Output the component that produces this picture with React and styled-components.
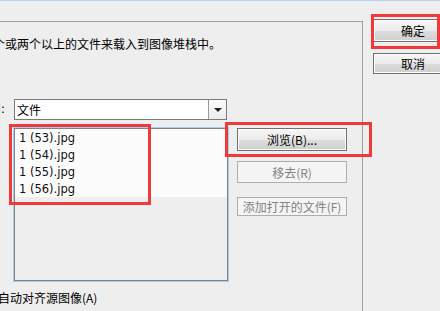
import React from 'react';
import styled, { createGlobalStyle } from 'styled-components';

const GlobalStyle = createGlobalStyle`
  html, body {
    margin: 0;
    padding: 0;
    background: #eeeeee;
  }
  body {
    font-family: "Noto Sans CJK SC", "Noto Sans", sans-serif;
    font-size: 12px;
    color: #000;
  }
`;

const Dialog = styled.div`
  position: relative;
  width: 440px;
  height: 311px;
  overflow: hidden;
  background: #eeeeee;
  display: flex;
  flex-direction: column;
`;

const TitleEdge = styled.div`
  flex: none;
  height: 1px;
  background: #bcd4ec;
`;

const Body = styled.div`
  flex: 1;
  display: flex;
  align-items: flex-start;
`;

const GroupBox = styled.div`
  flex: none;
  width: 363px;
  height: 300px;
  margin-top: 20px;
  padding-top: 14px;
  box-sizing: border-box;
  border-top: 1px solid #a0a0a0;
  border-right: 1px solid #a0a0a0;
  display: flex;
  flex-direction: column;
`;

const Line = styled.div`
  line-height: 16px;
  height: 16px;
  white-space: nowrap;
  margin-left: ${({ $indent }) => $indent}px;
  margin-top: ${({ $top }) => $top || 0}px;
`;

const SelectRow = styled.div`
  display: flex;
  align-items: center;
  margin-top: 47px;
  height: 21px;
`;

const FieldLabel = styled.div`
  width: 14px;
  display: flex;
  justify-content: flex-end;
  overflow: hidden;
  white-space: nowrap;
  padding-right: 9px;
  box-sizing: border-box;
  font-family: "DejaVu Sans", sans-serif;
`;

const Select = styled.div`
  width: 213px;
  height: 21px;
  box-sizing: border-box;
  border: 1px solid #7a7a7a;
  background: #ffffff;
  display: flex;
`;

const SelectValue = styled.div`
  flex: 1;
  padding-left: 2px;
  line-height: 19px;
`;

const DropButton = styled.div`
  width: 17px;
  border-left: 1px solid #9a9a9a;
  background: linear-gradient(#fbfbfb, #ececec);
  display: flex;
  align-items: center;
  justify-content: center;
`;

const Arrow = styled.span`
  width: 0;
  height: 0;
  border-left: 4px solid transparent;
  border-right: 4px solid transparent;
  border-top: 4px solid #222;
`;

const ListArea = styled.div`
  display: flex;
  align-items: flex-start;
  margin-top: 8px;
`;

const FileList = styled.div`
  width: 214px;
  height: 153px;
  margin-left: 14px;
  box-sizing: border-box;
  border: 1px solid #828282;
  box-shadow: 0 0 0 1px #a9cdf0;
  background: #eeeeee;
`;

const FileRow = styled.div`
  height: 17px;
  line-height: 19px;
  padding-left: 4px;
  background: #fbfbfb;
  font-family: "DejaVu Sans", sans-serif;
  font-size: 11.5px;
  color: #111;
`;

const ButtonColumn = styled.div`
  display: flex;
  flex-direction: column;
  margin-left: 9px;
`;

const Button = styled.div`
  box-sizing: border-box;
  width: ${({ $w }) => $w}px;
  height: ${({ $h }) => $h}px;
  margin-top: ${({ $top }) => $top || 0}px;
  display: flex;
  align-items: center;
  justify-content: center;
  white-space: nowrap;
  border: 1px solid ${({ $disabled }) => ($disabled ? '#adadad' : '#707070')};
  background: ${({ $disabled }) =>
    $disabled ? '#f4f4f4' : 'linear-gradient(#f6f6f6 0%, #ebebeb 50%, #dddddd 51%, #cfcfcf 100%)'};
  color: ${({ $disabled }) => ($disabled ? '#838383' : '#000')};
  box-shadow: ${({ $disabled }) => ($disabled ? 'none' : 'inset 0 0 0 1px #fcfcfc')};
`;

const SideColumn = styled.div`
  display: flex;
  flex-direction: column;
  margin-left: 10px;
  padding-top: 18px;
`;

const Mark = styled.div`
  position: absolute;
  box-sizing: border-box;
  border: 3px solid #f03a3a;
  pointer-events: none;
`;

const files = ['1 (53).jpg', '1 (54).jpg', '1 (55).jpg', '1 (56).jpg'];

const marks = [
  { left: 371, top: 14, width: 69, height: 35 },
  { left: 9, top: 124, width: 142, height: 81 },
  { left: 225, top: 122, width: 147, height: 35 },
];

const App = () => (
  <>
    <GlobalStyle />
    <Dialog>
      <TitleEdge />
      <Body>
        <GroupBox>
          <Line $indent={-7}>个或两个以上的文件来载入到图像堆栈中。</Line>
          <SelectRow>
            <FieldLabel>使用:</FieldLabel>
            <Select>
              <SelectValue>文件</SelectValue>
              <DropButton>
                <Arrow />
              </DropButton>
            </Select>
          </SelectRow>
          <ListArea>
            <FileList>
              {files.map((f) => (
                <FileRow key={f}>{f}</FileRow>
              ))}
            </FileList>
            <ButtonColumn>
              <Button $w={110} $h={23}>浏览(B)...</Button>
              <Button $w={110} $h={22} $top={10} $disabled>
                移去(R)
              </Button>
              <Button $w={110} $h={19} $top={14} $disabled>
                添加打开的文件(F)
              </Button>
            </ButtonColumn>
          </ListArea>
          <Line $indent={-2} $top={9}>
            自动对齐源图像(A)
          </Line>
        </GroupBox>
        <SideColumn>
          <Button $w={80} $h={23}>确定</Button>
          <Button $w={80} $h={21} $top={11}>取消</Button>
        </SideColumn>
      </Body>
      {marks.map((m, i) => (
        <Mark key={i} style={m} />
      ))}
    </Dialog>
  </>
);

export default App;
